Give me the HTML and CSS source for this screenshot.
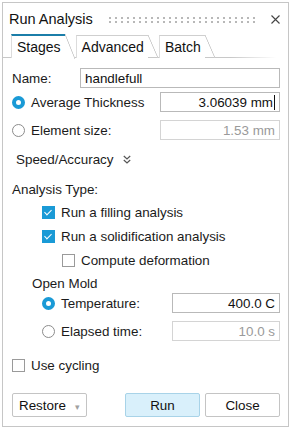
FILE: index.html
```html
<!DOCTYPE html>
<html lang="en">
<head>
    <meta charset="UTF-8">
    <title>Run Analysis</title>
    <link rel="stylesheet" href="styles.css">
</head>
<body>
    <div class="panel">
        <!-- Title bar -->
        <div class="titlebar">
            <span class="title">Run Analysis</span>
            <span class="grip"></span>
            <svg class="close" width="9" height="9" viewBox="0 0 9 9">
                <path d="M0.5 0.5 L8.5 8.5 M8.5 0.5 L0.5 8.5" stroke="#444" stroke-width="1.1" fill="none"/>
            </svg>
        </div>

        <!-- Tabs -->
        <div class="tabs">
            <div class="tab active">Stages</div>
            <div class="tab">Advanced</div>
            <div class="tab">Batch</div>
        </div>

        <div class="form">
            <div class="row row-name">
                <span class="label-name">Name:</span>
                <input class="field field-name" type="text" value="handlefull">
            </div>

            <div class="row row-avg">
                <span class="radio checked"></span>
                <span class="text">Average Thickness</span>
                <div class="field field-num">3.06039 mm<span class="caret"></span></div>
            </div>

            <div class="row row-elem">
                <span class="radio"></span>
                <span class="text">Element size:</span>
                <div class="field field-num disabled">1.53 mm</div>
            </div>

            <div class="row row-speed">
                <span>Speed/Accuracy</span>
                <svg class="chevron" width="8" height="9" viewBox="0 0 8 9">
                    <path d="M0.8 1 L4 4 L7.2 1 M0.8 5 L4 8 L7.2 5" stroke="#555" stroke-width="1.2" fill="none"/>
                </svg>
            </div>

            <div class="row row-type">Analysis Type:</div>

            <div class="row row-cb1 indent1">
                <span class="check checked"></span>
                <span class="text">Run a filling analysis</span>
            </div>
            <div class="row row-cb2 indent1">
                <span class="check checked"></span>
                <span class="text">Run a solidification analysis</span>
            </div>
            <div class="row row-cb3 indent2">
                <span class="check"></span>
                <span class="text">Compute deformation</span>
            </div>

            <div class="row row-mold">Open Mold</div>

            <div class="row row-temp indent1">
                <span class="radio checked"></span>
                <span class="text">Temperature:</span>
                <div class="field field-short">400.0 C</div>
            </div>
            <div class="row row-time indent1">
                <span class="radio"></span>
                <span class="text">Elapsed time:</span>
                <div class="field field-short disabled">10.0 s</div>
            </div>

            <div class="row row-cycle">
                <span class="check"></span>
                <span class="text">Use cycling</span>
            </div>

            <div class="row buttons">
                <button class="btn btn-restore">Restore <span class="drop">&#9662;</span></button>
                <button class="btn btn-run">Run</button>
                <button class="btn">Close</button>
            </div>
        </div>
    </div>
</body>
</html>
```

FILE: styles.css
```css
* {
    margin: 0;
    padding: 0;
    box-sizing: border-box;
}

body {
    margin: 2px;
    font-family: "Liberation Sans", Arial, sans-serif;
    font-size: 13.4px;
    color: #1b1b1b;
    background: #fff;
}

.panel {
    width: 287px;
    height: 425px;
    border: 1px solid #c6c6c6;
}

/* Title bar */
.titlebar {
    display: flex;
    align-items: center;
    height: 31px;
    padding: 0 8px 0 6px;
}

.title {
    font-size: 14.5px;
    color: #111;
}

.grip {
    width: 150px;
    height: 6px;
    margin: 2px 0 0 16px;
    background-image: radial-gradient(circle, #b8b8b8 0.9px, transparent 1.1px);
    background-size: 6px 4px;
    background-position: -2px -1px;
}

.close {
    margin-left: auto;
    margin-top: 1px;
}

/* Tabs */
.tabs {
    display: flex;
    align-items: flex-end;
    height: 24px;
    padding-left: 8px;
    background: linear-gradient(to right, #c8c8c8, #c8c8c8 80%, #fff 96%) no-repeat left bottom / 100% 1px;
}

.tab {
    position: relative;
    height: 23px;
    line-height: 22px;
    padding: 0 4px 0 5px;
    margin-right: 11px;
    font-size: 14px;
    color: #111;
    border-top: 1px solid #cfcfcf;
    border-left: 1px solid #dcdcdc;
    background: #fff;
}

.tab::after {
    content: '';
    position: absolute;
    top: -1px;
    right: -10px;
    width: 10px;
    height: 23px;
    background: linear-gradient(to bottom left, transparent calc(50% - 0.7px), #cfcfcf calc(50% - 0.2px), #cfcfcf calc(50% + 0.2px), transparent calc(50% + 0.7px));
}

.tab.active {
    height: 24px;
    border-top: 2px solid #1b7ea9;
    z-index: 1;
}

.tab.active::after {
    top: -2px;
    height: 25px;
    background: linear-gradient(to bottom left, transparent calc(50% - 0.7px), #cfcfcf calc(50% - 0.2px), #cfcfcf calc(50% + 0.2px), #fff calc(50% + 0.7px));
}

/* Form rows */
.form {
    padding: 10px 8px 0 9px;
}

.row {
    display: flex;
    align-items: center;
    height: 18px;
}

.text {
    margin-left: 6px;
}

.indent1 {
    padding-left: 30px;
}

.indent2 {
    padding-left: 50px;
}

.row-name { height: 20px; }
.row-avg { height: 20px; margin-top: 4px; }
.row-elem { height: 20px; margin-top: 8px; }
.row-speed { height: 20px; margin-top: 9px; padding-left: 4px; }
.row-type { margin-top: 11px; }
.row-cb1 { margin-top: 5px; }
.row-cb2 { margin-top: 6px; }
.row-cb3 { margin-top: 6px; }
.row-mold { margin-top: 5px; padding-left: 20px; }
.row-temp { height: 20px; margin-top: 1px; }
.row-time { height: 20px; margin-top: 8px; }
.row-cycle { margin-top: 15px; }

.label-name {
    width: 68px;
}

.chevron {
    margin-left: 9px;
    margin-top: 1px;
}

/* Inputs */
.field {
    height: 20px;
    margin-left: auto;
    border: 1px solid #b9b9b9;
    font-family: inherit;
    font-size: 13.4px;
    color: #111;
    background: #fff;
}

.field-name {
    width: 200px;
    padding: 0 4px;
    outline: none;
}

.field-num {
    display: flex;
    align-items: center;
    justify-content: flex-end;
    width: 120px;
    padding-right: 4px;
}

.field-short {
    display: flex;
    align-items: center;
    justify-content: flex-end;
    width: 108px;
    padding-right: 4px;
}

.field.disabled {
    border-color: #d4d4d4;
    color: #9a9a9a;
}

.caret {
    width: 1px;
    height: 15px;
    margin-left: 1px;
    background: #111;
}

/* Radios and checkboxes */
.radio {
    flex: none;
    width: 13px;
    height: 13px;
    border: 1px solid #8c8c8c;
    border-radius: 50%;
    background: #fff;
}

.radio.checked {
    border: 4px solid #1a9ad6;
}

.check {
    flex: none;
    position: relative;
    width: 13px;
    height: 13px;
    border: 1px solid #9a9a9a;
    background: #fff;
}

.check.checked {
    border-color: #1a9ad6;
    background: #1a9ad6;
}

.check.checked::after {
    content: '';
    position: absolute;
    left: 3px;
    top: 1px;
    width: 3px;
    height: 6px;
    border-right: 1.5px solid #fff;
    border-bottom: 1.5px solid #fff;
    transform: rotate(45deg);
}

/* Buttons */
.buttons {
    height: 24px;
    margin-top: 19px;
}

.btn {
    width: 75px;
    height: 24px;
    font-family: inherit;
    font-size: 13.4px;
    color: #111;
    background: #fff;
    border: 1px solid #c4c4c4;
    border-radius: 2px;
}

.btn-restore {
    text-align: left;
    padding-left: 6px;
    margin-right: 38px;
}

.drop {
    margin-left: 5px;
    font-size: 9px;
    color: #a0a0a0;
}

.btn-run {
    margin-right: 5px;
    background: #d9f0fb;
    border-color: #a8d3e8;
}
```
